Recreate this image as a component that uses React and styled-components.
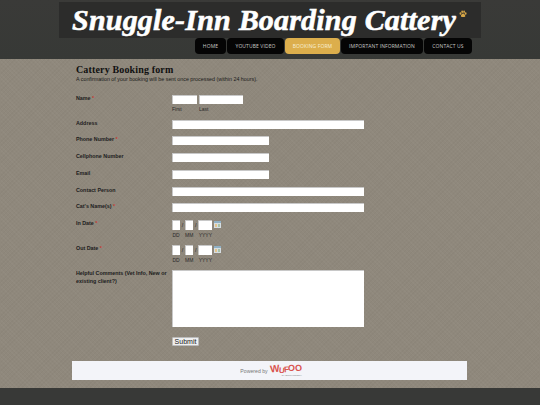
import React from 'react';
import styled, { createGlobalStyle } from 'styled-components';

const GlobalStyle = createGlobalStyle`
	html, body {
		margin: 0;
		padding: 0;
		background: #383937;
	}
	* {
		box-sizing: border-box;
	}
`;

const Page = styled.div`
	width: 540px;
	height: 405px;
	overflow: hidden;
	display: flex;
	flex-direction: column;
	font-family: 'Liberation Sans', Arial, sans-serif;
`;

const Header = styled.header`
	height: 59px;
	background: linear-gradient(#3a3a38, #373936);
	padding-top: 2px;
	display: flex;
	flex-direction: column;
	align-items: center;
`;

const TitleBand = styled.div`
	width: 422px;
	height: 36px;
	background: #2c2c2b;
	padding-left: 13px;
	display: flex;
	align-items: center;
	gap: 3px;
`;

const SiteTitle = styled.h1`
	margin: 0;
	font-family: 'Liberation Serif', serif;
	font-style: italic;
	font-weight: 700;
	font-size: 30px;
	line-height: 30px;
	letter-spacing: 0.2px;
	-webkit-text-stroke: 0.6px #fff;
	color: #fff;
	white-space: nowrap;
`;

const Nav = styled.nav`
	display: flex;
	gap: 1px;
	align-self: flex-start;
	margin-left: 195px;
`;

const NavButton = styled.a`
	width: ${(p) => p.$width}px;
	height: 16px;
	border-radius: 4px;
	background: ${(p) => (p.$active ? '#dcae4c' : '#050505')};
	color: ${(p) => (p.$active ? '#f8efd6' : '#c9c9c5')};
	font-family: 'Open Sans', sans-serif;
	font-size: 5px;
	letter-spacing: 0.1px;
	display: flex;
	align-items: center;
	justify-content: center;
	white-space: nowrap;
`;

const Main = styled.main`
	flex: 0 0 329px;
	background-color: #8f887c;
	background-image: repeating-linear-gradient(45deg, rgba(255, 255, 255, 0.025) 0 1px, transparent 1px 3px),
		repeating-linear-gradient(-45deg, rgba(0, 0, 0, 0.025) 0 1px, transparent 1px 3px);
	padding: 5px 0 0 76px;
`;

const FormTitle = styled.h2`
	margin: 0;
	font-family: 'Liberation Serif', serif;
	font-size: 10px;
	line-height: 11px;
	letter-spacing: 0.15px;
	color: #111;
`;

const Intro = styled.p`
	margin: 1px 0 12px;
	font-size: 5.35px;
	line-height: 7px;
	color: #1b1b1b;
`;

const Row = styled.div`
	height: ${(p) => p.$height}px;
	display: grid;
	grid-template-columns: 96px 1fr;
`;

const Label = styled.label`
	font-size: 5.35px;
	line-height: 8px;
	font-weight: 700;
	color: #1c1c1c;
	margin-top: -1px;
	padding-right: 2px;
`;

const Req = styled.span`
	color: #c43a32;
`;

const Field = styled.div`
	display: flex;
	align-items: flex-start;
	gap: ${(p) => p.$gap || 0}px;
`;

const Input = styled.div`
	width: ${(p) => p.$width}px;
	height: ${(p) => (p.$tall ? 10 : 9)}px;
	background: #fff;
	border: 1px solid #c8c8c8;
	border-width: 1px 0 0 1px;
`;

const Part = styled.div`
	display: flex;
	flex-direction: column;
`;

const Sub = styled.span`
	font-size: 5px;
	line-height: 6px;
	margin-top: 2px;
	color: #2a2a2a;
	white-space: nowrap;
	text-align: ${(p) => (p.$center ? 'center' : 'left')};
`;

const Slash = styled.span`
	width: 5px;
	font-size: 5.5px;
	line-height: 10px;
	text-align: center;
	color: #222;
`;

const CalendarIcon = styled.svg`
	width: 7px;
	height: 7px;
	margin: 1px 0 0 2px;
`;

const TextArea = styled.div`
	width: 192px;
	height: 57px;
	background: #fff;
	border-top: 1px solid #c8c8c8;
	border-left: 1px solid #c8c8c8;
`;

const Submit = styled.button`
	display: block;
	width: 27px;
	height: 9px;
	margin: 0 0 0 96px;
	padding: 0;
	font-family: 'Liberation Sans', Arial, sans-serif;
	font-size: 7px;
	line-height: 8px;
	color: #1a1a1a;
	background: #efefef;
	border: 1px solid #bbb;
	border-radius: 1px;
`;

const Powered = styled.div`
	width: 395px;
	height: 19px;
	margin: 15px 0 0 -4px;
	background: #f3f4f9;
	display: flex;
	align-items: center;
	justify-content: center;
	gap: 4px;
	padding-left: 3px;
	font-size: 5.2px;
	color: #777;
`;

const Wufoo = styled.div`
	display: flex;
	flex-direction: column;
	align-items: flex-end;
	width: 30px;
`;

const WufooName = styled.div`
	display: flex;
	font-weight: 700;
	font-size: 9px;
	line-height: 9px;
	color: #d9534f;
`;

const WufooLetter = styled.span`
	transform: translateY(${(p) => p.$rise}px) rotate(${(p) => p.$tilt}deg);
	font-size: ${(p) => p.$size}px;
	margin-right: -0.4px;
`;

const WufooBy = styled.span`
	font-size: 2.5px;
	line-height: 3px;
	color: #777;
`;

const Footer = styled.footer`
	flex: 1;
	background: #383937;
`;

const Paw = () => (
	<svg width="8" height="8" viewBox="0 0 16 16" style={{ marginBottom: 12 }}>
		<g fill="#d6a647">
			<ellipse cx="3" cy="7" rx="1.8" ry="2.4" />
			<ellipse cx="6.3" cy="3.6" rx="1.8" ry="2.5" />
			<ellipse cx="10.2" cy="3.6" rx="1.8" ry="2.5" />
			<ellipse cx="13.3" cy="7" rx="1.8" ry="2.4" />
			<path d="M8.2 7c2.4 0 4.4 3 4.4 5 0 2-2 1.8-4.4 1.8S3.8 14 3.8 12c0-2 2-5 4.4-5z" />
		</g>
	</svg>
);

const Calendar = () => (
	<CalendarIcon viewBox="0 0 7 7">
		<rect width="7" height="7" fill="#d5dde2" />
		<rect width="7" height="2" fill="#8fb0c4" />
		<rect x="1" y="3" width="2" height="3" fill="#e4c48c" />
		<rect x="4" y="3" width="2" height="3" fill="#a9c3a8" />
	</CalendarIcon>
);

const navItems = [
	{ label: 'HOME', width: 31 },
	{ label: 'YOUTUBE VIDEO', width: 57 },
	{ label: 'BOOKING FORM', width: 55, active: true },
	{ label: 'IMPORTANT INFORMATION', width: 82 },
	{ label: 'CONTACT US', width: 48 },
];

const wufooLetters = [
	{ ch: 'W', rise: -1, tilt: -6, size: 10 },
	{ ch: 'U', rise: 1, tilt: 5, size: 8 },
	{ ch: 'F', rise: 0, tilt: -4, size: 8 },
	{ ch: 'O', rise: -1, tilt: 4, size: 9 },
	{ ch: 'O', rise: -1, tilt: -4, size: 9 },
];

const DateField = () => (
	<Field>
		<Part>
			<Input $width={8} $tall />
			<Sub $center>DD</Sub>
		</Part>
		<Slash>/</Slash>
		<Part>
			<Input $width={8} $tall />
			<Sub $center>MM</Sub>
		</Part>
		<Slash>/</Slash>
		<Part>
			<Input $width={14} $tall />
			<Sub $center>YYYY</Sub>
		</Part>
		<Calendar />
	</Field>
);

const App = () => {
	return (
		<Page>
			<GlobalStyle />
			<Header>
				<TitleBand>
					<SiteTitle>Snuggle-Inn Boarding Cattery</SiteTitle>
					<Paw />
				</TitleBand>
				<Nav>
					{navItems.map((item) => (
						<NavButton key={item.label} $width={item.width} $active={item.active}>
							{item.label}
						</NavButton>
					))}
				</Nav>
			</Header>
			<Main>
				<FormTitle>Cattery Booking form</FormTitle>
				<Intro>A confirmation of your booking will be sent once processed (within 24 hours).</Intro>
				<Row $height={25}>
					<Label>
						Name <Req>*</Req>
					</Label>
					<Field $gap={2}>
						<Part>
							<Input $width={25} />
							<Sub>First</Sub>
						</Part>
						<Part>
							<Input $width={44} />
							<Sub>Last</Sub>
						</Part>
					</Field>
				</Row>
				<Row $height={16}>
					<Label>Address</Label>
					<Input $width={192} />
				</Row>
				<Row $height={17}>
					<Label>
						Phone Number <Req>*</Req>
					</Label>
					<Input $width={97} />
				</Row>
				<Row $height={17}>
					<Label>Cellphone Number</Label>
					<Input $width={97} />
				</Row>
				<Row $height={17}>
					<Label>Email</Label>
					<Input $width={97} />
				</Row>
				<Row $height={16}>
					<Label>Contact Person</Label>
					<Input $width={192} />
				</Row>
				<Row $height={17}>
					<Label>
						Cat&apos;s Name(s) <Req>*</Req>
					</Label>
					<Input $width={192} />
				</Row>
				<Row $height={25}>
					<Label>
						In Date <Req>*</Req>
					</Label>
					<DateField />
				</Row>
				<Row $height={25}>
					<Label>
						Out Date <Req>*</Req>
					</Label>
					<DateField />
				</Row>
				<Row $height={67}>
					<Label>Helpful Comments (Vet Info, New or existing client?)</Label>
					<TextArea />
				</Row>
				<Submit type="button">Submit</Submit>
				<Powered>
					<span>Powered by</span>
					<Wufoo>
						<WufooName>
							{wufooLetters.map((l, i) => (
								<WufooLetter key={i} $rise={l.rise} $tilt={l.tilt} $size={l.size}>
									{l.ch}
								</WufooLetter>
							))}
						</WufooName>
						<WufooBy>by SurveyMonkey</WufooBy>
					</Wufoo>
				</Powered>
			</Main>
			<Footer />
		</Page>
	);
};

export default App;
